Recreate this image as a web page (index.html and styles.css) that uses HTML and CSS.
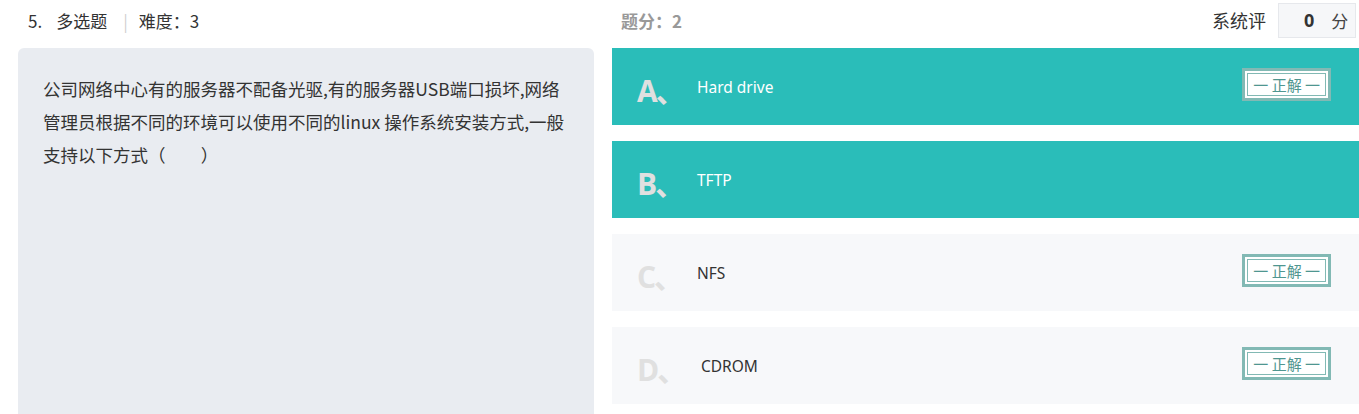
FILE: index.html
```html
<!DOCTYPE html>
<html lang="zh-CN">
<head>
<meta charset="utf-8">
<title>多选题</title>
<link rel="stylesheet" href="styles.css">
</head>
<body>
<div class="page">
  <header class="head">
    <div class="head-left">
      <span class="num">5.</span>
      <span class="type">多选题</span>
      <span class="sep">|</span>
      <span class="diff">难度：3</span>
    </div>
    <div class="head-mid">题分：2</div>
    <div class="head-right">
      <span class="eval-label">系统评</span>
      <div class="score-box"><b class="score">0</b><span class="unit">分</span></div>
    </div>
  </header>
  <main class="body">
    <section class="question">
      <p class="q-text">公司网络中心有的服务器不配备光驱,有的服务器USB端口损坏,网络管理员根据不同的环境可以使用不同的linux 操作系统安装方式,一般支持以下方式（&nbsp;&nbsp;&nbsp;&nbsp;&nbsp;&nbsp;&nbsp;&nbsp;&nbsp;）</p>
    </section>
    <section class="options">
      <div class="opt opt-sel">
        <span class="letter">A、</span>
        <span class="opt-text">Hard drive</span>
        <span class="badge"><span class="badge-in">一 正解 一</span></span>
      </div>
      <div class="opt opt-sel">
        <span class="letter">B、</span>
        <span class="opt-text">TFTP</span>
      </div>
      <div class="opt">
        <span class="letter">C、</span>
        <span class="opt-text">NFS</span>
        <span class="badge"><span class="badge-in">一 正解 一</span></span>
      </div>
      <div class="opt">
        <span class="letter">D、</span>
        <span class="opt-text opt-text-d">CDROM</span>
        <span class="badge"><span class="badge-in">一 正解 一</span></span>
      </div>
    </section>
  </main>
</div>
</body>
</html>
```

FILE: styles.css
```css
* { box-sizing: border-box; }
html, body { margin: 0; padding: 0; }
body {
  overflow: hidden;
  background: #fff;
  font-family: "Noto Sans", "Noto Sans CJK SC", sans-serif;
  color: #333;
}
.page { width: 1359px; }

.head {
  display: grid;
  grid-template-columns: 612px 1fr auto;
  height: 40px;
  align-items: center;
}
.head-left {
  padding-left: 28px;
  font-size: 17px;
  display: flex;
  align-items: center;
  color: #333;
  font-family: "Noto Sans CJK SC", sans-serif;
}
.num { margin-right: 14px; }
.sep { color: #d0d0d0; margin: 0 11px 0 16px; }
.head-mid {
  padding-left: 9px;
  font-size: 17px;
  font-weight: bold;
  color: #999;
  font-family: "Noto Sans CJK SC", sans-serif;
}
.head-right {
  display: flex;
  align-items: center;
  padding-right: 3px;
}
.eval-label { font-size: 18px; color: #333; margin-right: 12px; font-family: "Noto Sans CJK SC", sans-serif; }
.score-box {
  width: 78px;
  height: 35px;
  background: #f6f7f9;
  border: 1px solid #e6e8ec;
  display: flex;
  align-items: center;
  padding-left: 25px;
}
.score { font-size: 18px; font-weight: bold; color: #333; margin-right: 17px; }
.unit { font-size: 17px; color: #444; font-family: "Noto Sans CJK SC", sans-serif; }

.body {
  display: flex;
  gap: 18px;
  padding-left: 18px;
  padding-top: 8px;
}
.question {
  width: 576px;
  height: 380px;
  background: #e9ecf1;
  border-radius: 6px;
  padding: 24px 25px 0 25px;
}
.q-text {
  margin: 0;
  font-size: 17.5px;
  line-height: 33px;
  color: #333;
  font-family: "Noto Sans CJK SC", sans-serif;
}

.options {
  flex: 1;
  display: flex;
  flex-direction: column;
  gap: 16px;
}
.opt {
  height: 77px;
  background: #f7f8fa;
  display: flex;
  align-items: center;
  padding-left: 25px;
  padding-right: 28px;
}
.opt-sel { background: #2abdb9; }
.letter {
  font-size: 30px;
  font-weight: bold;
  color: #e0e0e0;
  width: 60px;
  letter-spacing: -2px;
  font-family: "Open Sans", "Noto Sans CJK SC", sans-serif;
  position: relative;
  top: 2px;
  white-space: nowrap;
}
.opt-text {
  font-size: 15.5px;
  color: #333;
}
.opt-text-d { margin-left: 4px; }
.opt-sel .opt-text { color: #fff; }
.badge {
  margin-left: auto;
  border: 3px solid #82b9b4;
  background: #fff;
  padding: 2px;
  margin-bottom: 4px;
}
.badge-in {
  display: block;
  border: 1px solid #82b9b4;
  padding: 0 5px;
  line-height: 21px;
  font-size: 15px;
  color: #4f9690;
  white-space: nowrap;
  font-family: "Noto Sans CJK SC", sans-serif;
}
```
